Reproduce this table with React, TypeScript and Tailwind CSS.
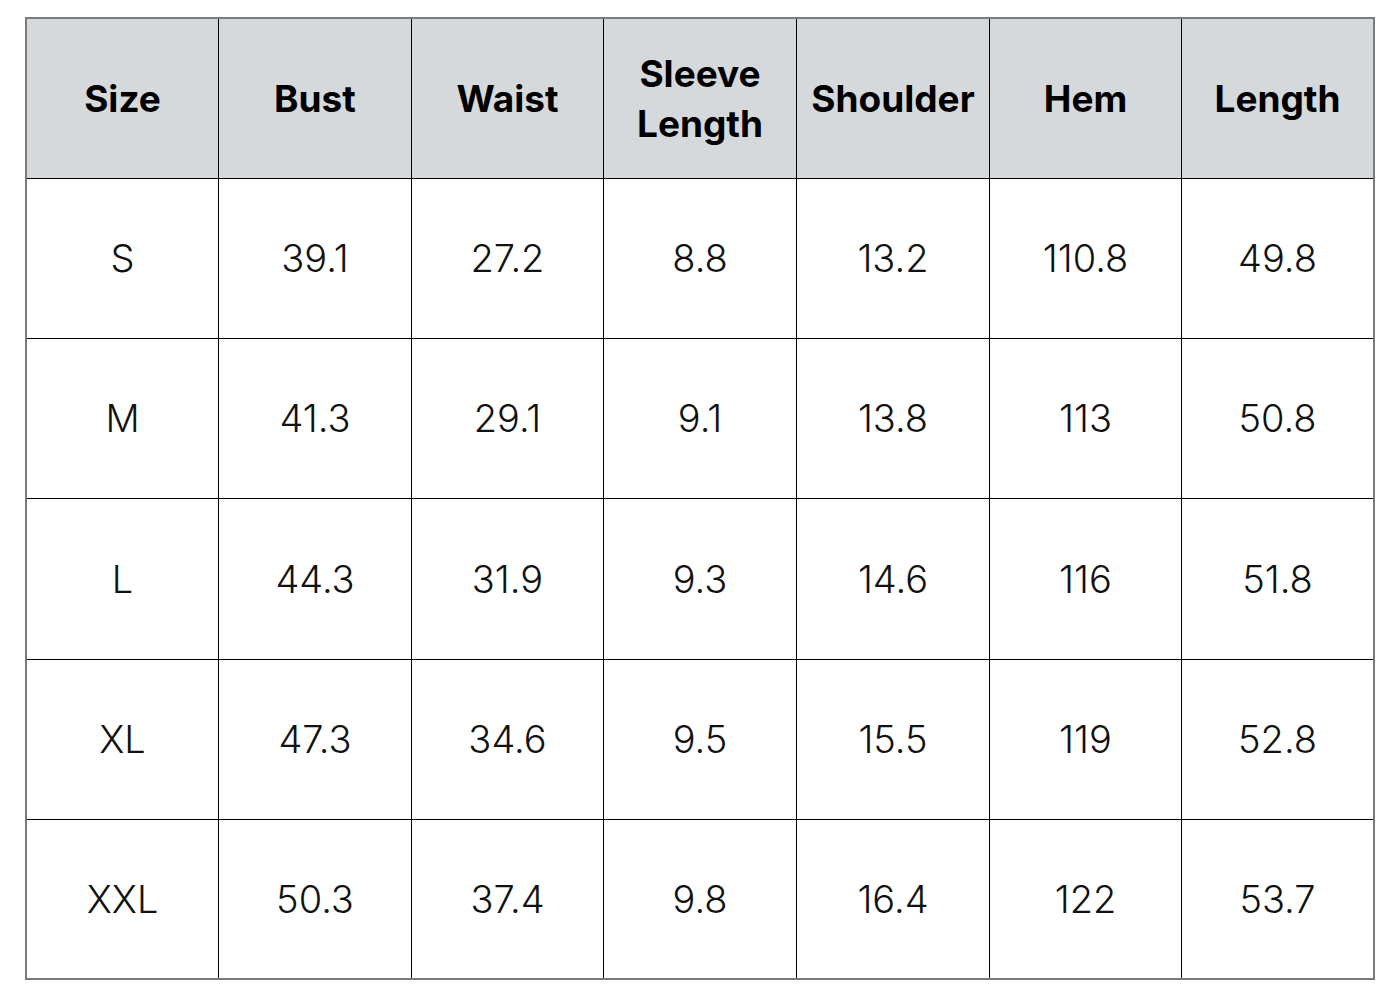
import React from "react";

const headers = ["Size", "Bust", "Waist", "Sleeve Length", "Shoulder", "Hem", "Length"];
const rows = [
  ["S", "39.1", "27.2", "8.8", "13.2", "110.8", "49.8"],
  ["M", "41.3", "29.1", "9.1", "13.8", "113", "50.8"],
  ["L", "44.3", "31.9", "9.3", "14.6", "116", "51.8"],
  ["XL", "47.3", "34.6", "9.5", "15.5", "119", "52.8"],
  ["XXL", "50.3", "37.4", "9.8", "16.4", "122", "53.7"],
];

export default function App() {
  return (
    <div className="w-[1400px] h-[1000px] bg-white pt-[17px] pl-[25px]" style={{ fontFamily: "Inter, 'Liberation Sans', sans-serif" }}>
      <div className="w-[1350px] h-[963px] border-2 border-[#7b7b7b] grid grid-cols-[192px_193px_192px_193px_193px_192px_1fr] grid-rows-[160px_160px_160px_161px_160px_158px]">
        {headers.map((h, i) => (
          <div
            key={h}
            className={`bg-[#d6d9db] flex items-center justify-center text-center text-[37px] leading-[50px] font-bold text-black border-b border-black ${i < 6 ? "border-r" : ""}`}
          >
            {h === "Sleeve Length" ? (
              <span>
                Sleeve
                <br />
                Length
              </span>
            ) : (
              h
            )}
          </div>
        ))}
        {rows.map((r, ri) =>
          r.map((c, ci) => (
            <div
              key={`${ri}-${ci}`}
              className={`flex items-center justify-center text-[38px] font-light text-[#111] border-black ${ci < 6 ? "border-r" : ""} ${ri < 4 ? "border-b" : ""}`}
            >
              {c}
            </div>
          ))
        )}
      </div>
    </div>
  );
}
